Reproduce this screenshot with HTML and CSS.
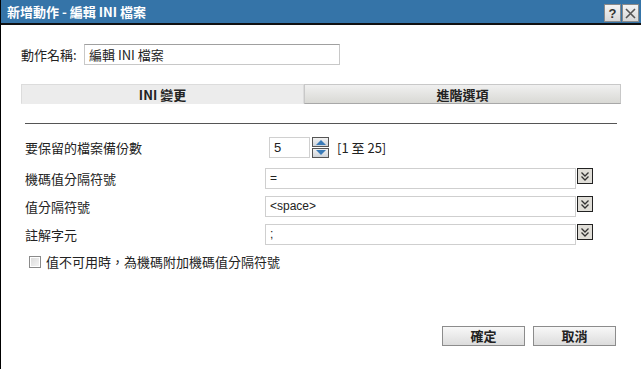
FILE: index.html
```html
<!DOCTYPE html>
<html lang="zh-Hant">
<head>
<meta charset="utf-8">
<link rel="stylesheet" href="styles.css">
</head>
<body>
<div class="dialog">
  <div class="titlebar">
    <span class="title">新增動作 - 編輯 INI 檔案</span>
    <div class="tbtns">
      <span class="tbtn help">?</span>
      <span class="tbtn close"><svg width="11" height="11" viewBox="0 0 11 11"><path d="M1 1L10 10M10 1L1 10" stroke="#555" stroke-width="1.6"/></svg></span>
    </div>
  </div>
  <div class="content">
    <div class="namerow">
      <span class="namelabel">動作名稱:</span>
      <div class="nameinput">編輯 INI 檔案</div>
    </div>
    <div class="tabs">
      <div class="tab active">INI 變更</div>
      <div class="tab">進階選項</div>
    </div>
    <div class="rule"></div>
    <div class="form">
      <div class="row first">
        <span class="lbl">要保留的檔案備份數</span>
        <div class="spin">
          <div class="spininput">5</div>
          <div class="spinbtns">
            <span class="sb"><svg width="14" height="8" viewBox="0 0 14 8"><path d="M2 7L7 2L12 7Z" fill="#3a7bb8"/></svg></span>
            <span class="sb"><svg width="14" height="8" viewBox="0 0 14 8"><path d="M2 1L7 6L12 1Z" fill="#3a7bb8"/></svg></span>
          </div>
          <span class="range">[1 至 25]</span>
        </div>
      </div>
      <div class="row">
        <span class="lbl">機碼值分隔符號</span>
        <div class="combo"><div class="cinput">=</div><span class="dd"><svg width="12" height="12" viewBox="0 0 12 12"><path d="M2.5 2.5L6 6L9.5 2.5M2.5 6.5L6 10L9.5 6.5" fill="none" stroke="#333" stroke-width="1.3"/></svg></span></div>
      </div>
      <div class="row">
        <span class="lbl">值分隔符號</span>
        <div class="combo"><div class="cinput">&lt;space&gt;</div><span class="dd"><svg width="12" height="12" viewBox="0 0 12 12"><path d="M2.5 2.5L6 6L9.5 2.5M2.5 6.5L6 10L9.5 6.5" fill="none" stroke="#333" stroke-width="1.3"/></svg></span></div>
      </div>
      <div class="row">
        <span class="lbl">註解字元</span>
        <div class="combo"><div class="cinput">;</div><span class="dd"><svg width="12" height="12" viewBox="0 0 12 12"><path d="M2.5 2.5L6 6L9.5 2.5M2.5 6.5L6 10L9.5 6.5" fill="none" stroke="#333" stroke-width="1.3"/></svg></span></div>
      </div>
      <div class="checkrow">
        <span class="cb"></span>
        <span class="cblabel">值不可用時，為機碼附加機碼值分隔符號</span>
      </div>
    </div>
    <div class="buttons">
      <span class="btn">確定</span>
      <span class="btn">取消</span>
    </div>
  </div>
</div>
</body>
</html>
```
FILE: styles.css
```css
html, body {
  margin: 0;
  padding: 0;
  background: #fff;
}
body {
  font-family: "Noto Sans CJK TC", "Liberation Sans", sans-serif;
  font-size: 12px;
  color: #222;
}
.dialog {
  width: 641px;
  height: 369px;
  box-sizing: border-box;
  border-left: 1px solid #000;
  display: flex;
  flex-direction: column;
}
.titlebar {
  height: 23px;
  background: #3574a8;
  border-bottom: 2px solid #111;
  display: flex;
  align-items: center;
  justify-content: space-between;
  padding-left: 6px;
  padding-right: 2px;
}
.title {
  color: #fff;
  font-weight: bold;
  font-size: 13px;
  line-height: 23px;
}
.tbtns {
  display: flex;
  gap: 1px;
  margin-top: 3px;
}
.tbtn {
  width: 15px;
  height: 16px;
  background: linear-gradient(#f4f4f4, #d8d8d8);
  border: 1px solid #8a8a8a;
  display: flex;
  align-items: center;
  justify-content: center;
  font-weight: bold;
  font-size: 13px;
  color: #333;
  font-family: "Liberation Sans", sans-serif;
}
.content {
  flex: 1;
  display: flex;
  flex-direction: column;
  padding: 0 20px 0 20px;
}
.namerow {
  display: flex;
  align-items: center;
  margin-top: 19px;
}
.namelabel {
  font-size: 13px;
  width: 63px;
}
.nameinput {
  width: 250px;
  height: 19px;
  border: 1px solid #c8c8c8;
  border-top-color: #a0a0a0;
  padding-left: 4px;
  font-size: 13px;
  line-height: 19px;
}
.tabs {
  display: flex;
  margin-top: 19px;
  height: 20px;
}
.tab {
  flex: 1;
  text-align: center;
  font-weight: bold;
  font-size: 13px;
  line-height: 19px;
  box-sizing: border-box;
  background: linear-gradient(#f0f0f0, #d9d9d5);
  border: 1px solid #c8c8c8;
  border-bottom-color: #a8a8a8;
}
.tab.active {
  flex: 0 0 283px;
  background: #ececec;
  border-color: #dcdcdc;
  border-bottom-color: #ececec;
}
.rule {
  margin: 19px 4px 0 4px;
  border-top: 1px solid #555;
}
.form {
  margin-top: 13px;
  display: flex;
  flex-direction: column;
  gap: 7px;
}
.row {
  display: flex;
  align-items: center;
  height: 21px;
}
.row.first {
  margin-bottom: 3px;
}
.lbl {
  width: 240px;
  padding-left: 4px;
  font-size: 13px;
}
.spin {
  display: flex;
  align-items: center;
  margin-left: 4px;
}
.spininput {
  width: 35px;
  height: 19px;
  border: 1px solid #d0d0d0;
  padding-left: 4px;
  font-size: 13px;
  line-height: 19px;
  font-family: "Liberation Sans", sans-serif;
}
.spinbtns {
  display: flex;
  flex-direction: column;
  gap: 1px;
  margin-left: 2px;
}
.sb {
  width: 15px;
  height: 8px;
  border: 1px solid #555;
  background: linear-gradient(#f2f2f2, #cfd4da);
  display: flex;
  align-items: center;
  justify-content: center;
  overflow: hidden;
}
.range {
  margin-left: 8px;
  font-size: 13px;
}
.combo {
  display: flex;
  align-items: flex-start;
  height: 21px;
}
.cinput {
  width: 305px;
  height: 19px;
  border: 1px solid #cfcfcf;
  padding-left: 4px;
  font-size: 12px;
  line-height: 19px;
  font-family: "Liberation Sans", sans-serif;
}
.dd {
  width: 14px;
  height: 14px;
  margin-left: 1px;
  border: 1px solid #222;
  background: #e0ded8;
  display: flex;
  align-items: center;
  justify-content: center;
}
.checkrow {
  display: flex;
  align-items: center;
  margin-top: 0;
  padding-left: 8px;
}
.cb {
  width: 10px;
  height: 10px;
  border: 1px solid #8a8a8a;
  background: linear-gradient(135deg, #d8d8d8, #f6f6f6);
  box-shadow: inset 0 0 0 1px #fff;
}
.cblabel {
  margin-left: 5px;
  font-size: 13px;
}
.buttons {
  display: flex;
  justify-content: flex-end;
  gap: 8px;
  margin-top: 55px;
  padding-right: 5px;
}
.btn {
  width: 81px;
  height: 18px;
  border: 1px solid #8c8c8c;
  background: linear-gradient(#f8f8f8, #dcdcdc);
  text-align: center;
  font-weight: bold;
  font-size: 13px;
  line-height: 18px;
}
```
